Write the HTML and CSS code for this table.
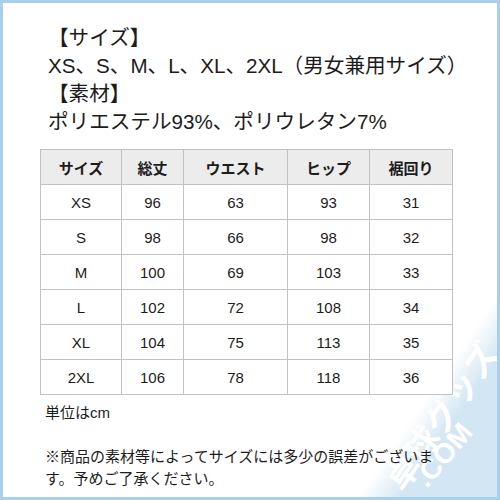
FILE: index.html
```html
<!DOCTYPE html>
<html lang="ja">
<head>
  <meta charset="UTF-8" />
  <meta name="viewport" content="width=device-width, initial-scale=1.0" />
  <title>サイズ表</title>
  <link rel="stylesheet" href="styles.css">
</head>
<body>
  <div class="frame">
    <div class="info">
      <div class="label">【サイズ】</div>
      <div>XS、S、M、L、XL、2XL（男女兼用サイズ）</div>
      <div class="label">【素材】</div>
      <div>ポリエステル93%、ポリウレタン7%</div>
    </div>

    <table class="size-table">
      <colgroup>
        <col class="c1"><col class="c2"><col class="c3"><col class="c4"><col class="c5">
      </colgroup>
      <thead>
        <tr>
          <th>サイズ</th>
          <th>総丈</th>
          <th>ウエスト</th>
          <th>ヒップ</th>
          <th>裾回り</th>
        </tr>
      </thead>
      <tbody>
        <tr><td>XS</td><td>96</td><td>63</td><td>93</td><td>31</td></tr>
        <tr><td>S</td><td>98</td><td>66</td><td>98</td><td>32</td></tr>
        <tr><td>M</td><td>100</td><td>69</td><td>103</td><td>33</td></tr>
        <tr><td>L</td><td>102</td><td>72</td><td>108</td><td>34</td></tr>
        <tr><td>XL</td><td>104</td><td>75</td><td>113</td><td>35</td></tr>
        <tr><td>2XL</td><td>106</td><td>78</td><td>118</td><td>36</td></tr>
      </tbody>
    </table>

    <div class="notes">
      <p class="unit">単位はcm</p>
      <p>※商品の素材等によってサイズには多少の誤差がございます。予めご了承ください。</p>
    </div>

    <!-- 透かし -->
    <svg class="watermark" width="180" height="200" viewBox="0 0 180 200" aria-hidden="true">
      <defs>
        <linearGradient id="wmFade" gradientUnits="userSpaceOnUse" x1="110" y1="100" x2="139" y2="120">
          <stop offset="0" stop-color="#d6e8f4" stop-opacity="0" />
          <stop offset="1" stop-color="#d3e6f3" stop-opacity="1" />
        </linearGradient>
      </defs>
      <polygon points="180,0 180,200 40,200" fill="url(#wmFade)" />
      <text class="wm-big" x="0" y="0" transform="translate(86,196) rotate(-55)">卓球グッズ</text>
      <text class="wm-small" x="0" y="0" transform="translate(110,192) rotate(-50)">.COM</text>
    </svg>
  </div>
</body>
</html>
```

FILE: styles.css
```css
body {
  margin: 0;
  font-family: "Liberation Sans", "Noto Sans CJK JP", sans-serif;
  color: #1c1c1c;
  background: #fff;
}

.frame {
  position: relative;
  width: 500px;
  height: 500px;
  box-sizing: border-box;
  border: 3px solid #a9d0ea;
  overflow: hidden;
}

.info {
  padding: 21px 0 0 45px;
  font-size: 20.6px;
  line-height: 28px;
}

.size-table {
  margin: 13px 0 0 37px;
  width: 412px;
  border-collapse: collapse;
  table-layout: fixed;
  font-size: 15px;
  text-align: center;
  background: #fff;
  position: relative;
  z-index: 1;
}
.size-table th,
.size-table td {
  border: 1px solid #c2c2c2;
  height: 34px;
  padding: 0;
}
.size-table th {
  background: #ececec;
  font-weight: bold;
}
.c1 { width: 81px; }
.c2 { width: 62px; }
.c3 { width: 104px; }
.c4 { width: 82px; }
.c5 { width: 83px; }

.notes {
  margin: 7px 0 0 42px;
  width: 402px;
  font-size: 15px;
  line-height: 22px;
  position: relative;
  z-index: 1;
}
.notes p {
  margin: 0;
}
.notes .unit {
  margin-bottom: 22px;
}

.watermark {
  position: absolute;
  right: 0;
  bottom: 0;
}
.wm-big {
  font-family: "Noto Sans CJK JP", sans-serif;
  font-weight: bold;
  font-size: 34px;
  fill: #fff;
}
.wm-small {
  font-family: "Liberation Sans", sans-serif;
  font-weight: bold;
  font-size: 28px;
  fill: #fff;
}
```
